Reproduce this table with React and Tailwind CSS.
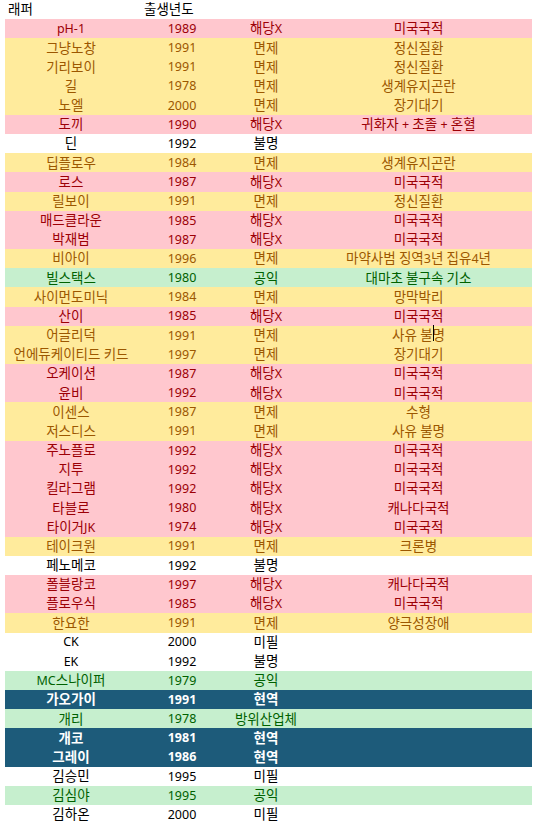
import React from "react";

const rows = [
  ["pH-1", "1989", "해당X", "미국국적", "p"],
  ["그냥노창", "1991", "면제", "정신질환", "y"],
  ["기리보이", "1991", "면제", "정신질환", "y"],
  ["길", "1978", "면제", "생계유지곤란", "y"],
  ["노엘", "2000", "면제", "장기대기", "y"],
  ["도끼", "1990", "해당X", "귀화자 + 초졸 + 혼혈", "p"],
  ["딘", "1992", "불명", "", "w"],
  ["딥플로우", "1984", "면제", "생계유지곤란", "y"],
  ["로스", "1987", "해당X", "미국국적", "p"],
  ["릴보이", "1991", "면제", "정신질환", "y"],
  ["매드클라운", "1985", "해당X", "미국국적", "p"],
  ["박재범", "1987", "해당X", "미국국적", "p"],
  ["비아이", "1996", "면제", "마약사범 징역3년 집유4년", "y"],
  ["빌스택스", "1980", "공익", "대마초 불구속 기소", "g"],
  ["사이먼도미닉", "1984", "면제", "망막박리", "y"],
  ["산이", "1985", "해당X", "미국국적", "p"],
  ["어글리덕", "1991", "면제", "CURSOR", "y"],
  ["언에듀케이티드 키드", "1997", "면제", "장기대기", "y"],
  ["오케이션", "1987", "해당X", "미국국적", "p"],
  ["윤비", "1992", "해당X", "미국국적", "p"],
  ["이센스", "1987", "면제", "수형", "y"],
  ["저스디스", "1991", "면제", "사유 불명", "y"],
  ["주노플로", "1992", "해당X", "미국국적", "p"],
  ["지투", "1992", "해당X", "미국국적", "p"],
  ["킬라그램", "1992", "해당X", "미국국적", "p"],
  ["타블로", "1980", "해당X", "캐나다국적", "p"],
  ["타이거JK", "1974", "해당X", "미국국적", "p"],
  ["테이크원", "1991", "면제", "크론병", "y"],
  ["페노메코", "1992", "불명", "", "w"],
  ["폴블랑코", "1997", "해당X", "캐나다국적", "p"],
  ["플로우식", "1985", "해당X", "미국국적", "p"],
  ["한요한", "1991", "면제", "양극성장애", "y"],
  ["CK", "2000", "미필", "", "w"],
  ["EK", "1992", "불명", "", "w"],
  ["MC스나이퍼", "1979", "공익", "", "g"],
  ["가오가이", "1991", "현역", "", "d"],
  ["개리", "1978", "방위산업체", "", "g"],
  ["개코", "1981", "현역", "", "d"],
  ["그레이", "1986", "현역", "", "d"],
  ["김승민", "1995", "미필", "", "w"],
  ["김심야", "1995", "공익", "", "g"],
  ["김하온", "2000", "미필", "", "w"],
];

const styles = {
  p: "bg-[#ffc7ce] text-[#9c0006]",
  y: "bg-[#ffeb9c] text-[#9c5700]",
  g: "bg-[#c6efce] text-[#006100]",
  w: "bg-white text-black",
  d: "bg-[#1d5b7a] text-white font-bold",
};

function Parts({ s }) {
  const parts = s.split(/([가-힣]+)/).filter((x) => x !== "");
  return parts.map((p, i) =>
    /[가-힣]/.test(p) ? (
      <span key={i} className="text-[13.5px]">
        {p}
      </span>
    ) : (
      <React.Fragment key={i}>{p}</React.Fragment>
    )
  );
}

function T({ s }) {
  return (
    <span className="whitespace-pre">
      <Parts s={s} />
    </span>
  );
}

function Cell({ children }) {
  return (
    <div className="flex items-center justify-center whitespace-nowrap pt-px">
      {children}
    </div>
  );
}

export default function App() {
  return (
    <div
      className="w-[542px] h-[826px] bg-white overflow-hidden text-[12.5px] leading-none"
      style={{ fontFamily: '"Noto Sans", "Noto Sans CJK KR", sans-serif' }}
    >
      <div className="ml-[5px] w-[527px]">
        <div className="grid grid-cols-[132px_90px_78px_227px] h-[19px] text-black">
          <div className="flex items-center pl-[3px] pt-px">
            <T s="래퍼" />
          </div>
          <div className="flex items-center pl-[7px] pt-px">
            <T s="출생년도" />
          </div>
          <div />
          <div />
        </div>
        {rows.map((r, i) => (
          <div
            key={i}
            className={`grid grid-cols-[132px_90px_78px_227px] h-[19.18px] ${styles[r[4]]}`}
          >
            <Cell>
              <T s={r[0]} />
            </Cell>
            <Cell>
              <T s={r[1]} />
            </Cell>
            <Cell>
              <T s={r[2]} />
            </Cell>
            <Cell>
              {r[3] === "CURSOR" ? (
                <span className="whitespace-pre">
                  <Parts s="사유 불" />
                  <span className="relative text-[13.5px]">
                    명
                    <span className="absolute left-0 top-[-1px] w-px h-[16px] bg-black" />
                  </span>
                </span>
              ) : (
                <T s={r[3]} />
              )}
            </Cell>
          </div>
        ))}
      </div>
    </div>
  );
}
